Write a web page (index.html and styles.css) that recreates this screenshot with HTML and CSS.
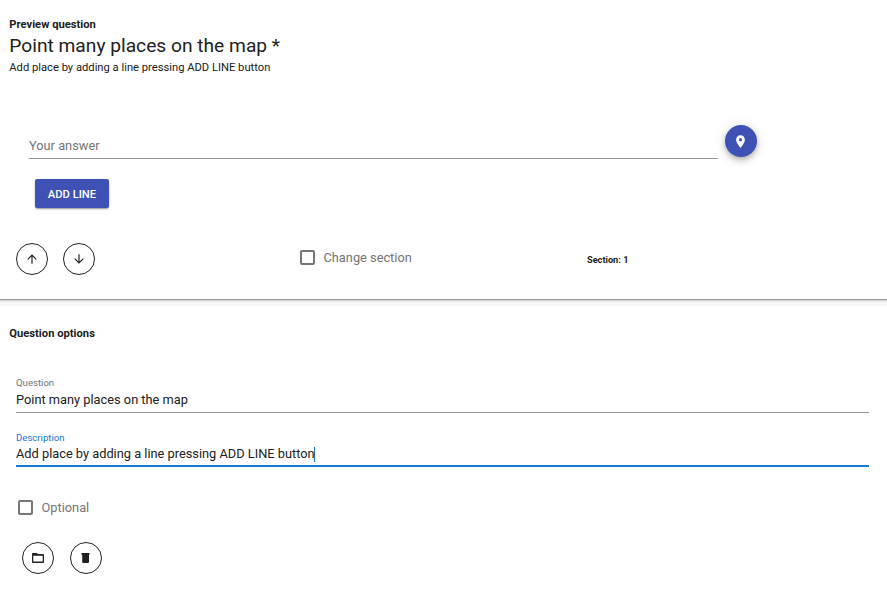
FILE: index.html
```html
<!DOCTYPE html>
<html lang="en">
<head>
<meta charset="utf-8">
<title>Question editor</title>
<link rel="stylesheet" href="styles.css">
</head>
<body>
<section class="preview">
  <h2 class="heading"><span>Preview question</span></h2>
  <h1 class="title"><span>Point many places on the map *</span></h1>
  <p class="description"><span>Add place by adding a line pressing ADD LINE button</span></p>
  <div class="answer-row">
    <div class="answer">Your answer</div>
    <button class="fab" aria-label="Choose place"><svg viewBox="0 0 24 24"><path d="M12 2C8.13 2 5 5.13 5 9c0 5.25 7 13 7 13s7-7.75 7-13c0-3.87-3.13-7-7-7zm0 9.5a2.5 2.5 0 0 1 0-5 2.5 2.5 0 0 1 0 5z"/></svg></button>
  </div>
  <button class="add-line">ADD LINE</button>
  <div class="controls">
    <div class="moves">
      <button class="round" aria-label="Move up"><svg viewBox="0 0 24 24"><path d="M4 12l1.41 1.41L11 7.83V20h2V7.83l5.58 5.59L20 12l-8-8-8 8z"/></svg></button>
      <button class="round" aria-label="Move down"><svg viewBox="0 0 24 24"><path d="M20 12l-1.41-1.41L13 16.17V4h-2v12.17l-5.58-5.59L4 12l8 8 8-8z"/></svg></button>
    </div>
    <label class="check"><i class="box"></i><span>Change section</span></label>
    <div class="section"><span>Section: 1</span></div>
  </div>
</section>
<section class="options">
  <h2 class="heading"><span>Question options</span></h2>
  <div class="field">
    <label>Question</label>
    <div class="value"><span>Point many places on the map</span></div>
  </div>
  <div class="field focused">
    <label>Description</label>
    <div class="value"><span>Add place by adding a line pressing ADD LINE button</span><i class="caret"></i></div>
  </div>
  <label class="check optional"><i class="box"></i><span>Optional</span></label>
  <div class="actions">
    <button class="round solid" aria-label="Duplicate"><svg viewBox="0 0 14 14"><path fill-rule="evenodd" d="M2 2h3.7l1.3 1h5q1 0 1 1V11q0 1-1 1H2q-1 0-1-1V3q0-1 1-1zm.3 2.8v5.6h9.4v-5.6z"/></svg></button>
    <button class="round solid" aria-label="Delete"><svg viewBox="0 0 14 14"><path d="M2.5 2h8v1.7h-8zM3.2 3.5h6.8V11q0 1-1 1H4.2q-1 0-1-1z"/></svg></button>
  </div>
</section>
</body>
</html>
```
FILE: styles.css
```css
* { box-sizing: border-box; }
body {
  margin: 0;
  height: 597px;
  overflow: hidden;
  background: #fff;
  color: #212121;
  font-family: Roboto, "Liberation Sans", sans-serif;
  font-size: 12.8px;
}
h1, h2, p { margin: 0; }
button {
  display: flex;
  align-items: center;
  justify-content: center;
  padding: 0;
  border: 0;
  font: inherit;
}
.preview {
  height: 300px;
  padding: 17px 0 0 9.3px;
  border-bottom: 1px solid #999;
  box-shadow: 0 1px 0 #d6d6d6, 0 2px 0 #ececec, 0 6px 0 #f7f7f7;
}
.heading { height: 16px; font-size: 11.2px; line-height: 16px; font-weight: 700; }
.title { height: 27px; font-size: 19.2px; line-height: 25px; font-weight: 400; }
.description { height: 16px; font-size: 11.2px; line-height: 16px; }
.answer-row {
  display: flex;
  gap: 7px;
  margin: 49px 0 0 19.7px;
}
.answer {
  width: 689px;
  height: 34px;
  padding-top: 12px;
  border-bottom: 1px solid #949494;
  color: #757575;
  line-height: 18px;
}
.fab {
  width: 32px;
  height: 32px;
  border-radius: 50%;
  background: #3f51b5;
  box-shadow: 0 2px 4px -1px rgba(0, 0, 0, .2), 0 4px 7px rgba(0, 0, 0, .14), 0 1px 13px rgba(0, 0, 0, .12);
}
.fab svg { width: 15px; margin-right: 1px; fill: #fff; }
.add-line {
  width: 74px;
  height: 29px;
  margin: 20px 0 0 25.7px;
  padding-top: 1px;
  border-radius: 2px;
  background: #3f51b5;
  color: #fff;
  font-size: 11.2px;
  font-weight: 500;
  box-shadow: 0 2px 1px -1px rgba(0, 0, 0, .2), 0 1px 2px rgba(0, 0, 0, .14), 0 1px 4px rgba(0, 0, 0, .12);
}
.controls {
  display: grid;
  grid-template-columns: 284px 287px 1fr;
  margin: 35px 0 0 6.7px;
}
.moves { display: flex; gap: 15px; }
.round {
  width: 32px;
  height: 32px;
  border: 1px solid #212121;
  border-radius: 50%;
  background: #fff;
}
.round svg { width: 14px; fill: #212121; }
.check {
  display: flex;
  align-items: center;
  gap: 8.5px;
  height: 29px;
  color: #757575;
}
.box {
  width: 15px;
  height: 15px;
  border: 2px solid #757575;
  border-radius: 2px;
}
.section { font-size: 9.2px; line-height: 34px; font-weight: 700; }
.options { padding: 25px 18px 0 16px; }
.options .heading { margin-left: -6.7px; line-height: 17px; }
.field { margin-top: 35px; height: 37px; border-bottom: 1px solid #949494; }
.field label { display: block; font-size: 9.6px; line-height: 13px; color: #757575; }
.value { display: flex; align-items: center; height: 20px; line-height: 20px; padding-top: 1px; }
.focused { margin-top: 18px; height: 36px; border-bottom: 2px solid #1976d2; }
.focused label { color: #1976d2; }
.focused .value { padding-top: 0; }
.caret { width: 1px; height: 15px; margin-left: -1px; background: #1976d2; }
.optional { margin: 26px 0 0 2px; }
.actions { display: flex; gap: 16px; margin: 20px 0 0 6px; }
```
